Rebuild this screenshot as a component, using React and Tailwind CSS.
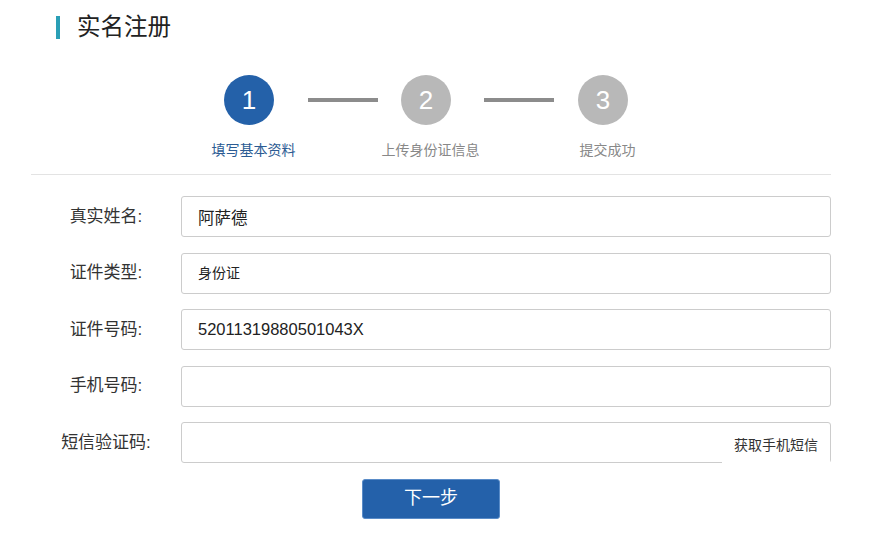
import { useState } from 'react';

const FONT = { fontFamily: '"Liberation Sans", "Noto Sans CJK SC", sans-serif' };

const steps = ['填写基本资料', '上传身份证信息', '提交成功'];

function Field({ label, children }) {
  return (
    <div className="flex items-center h-[41px]">
      <label className="w-[150px] text-center text-[17px] text-[#333]">{label}</label>
      <div className="relative flex-1 h-full">{children}</div>
    </div>
  );
}

export default function App() {
  const [name, setName] = useState('阿萨德');
  const [idNo, setIdNo] = useState('52011319880501043X');
  const [phone, setPhone] = useState('');
  const [code, setCode] = useState('');

  const inputCls =
    'w-full h-full border border-[#ccc] rounded-[3px] pl-[16px] pr-3 text-[16.5px] text-[#222] outline-none bg-white';

  return (
    <div className="min-h-screen bg-white" style={FONT}>
      <div className="ml-[31px] w-[800px] pt-[16px]">
        {/* 标题 */}
        <div className="flex items-center h-[23px] pl-[25px]">
          <span className="w-[4px] h-[23px] bg-[#2a9fb6]" />
          <h1 className="ml-[17px] text-[23.5px] text-[#222] leading-none">实名注册</h1>
        </div>

        {/* 步骤条 */}
        <div className="flex items-center mt-[36px] ml-[193px] h-[50px]">
          <div className="w-[50px] h-[50px] rounded-full bg-[#2461a9] text-white text-[26px] flex items-center justify-center">1</div>
          <div className="w-[70px] h-[4px] bg-[#8c8c8c] ml-[34px] mr-[23px]" />
          <div className="w-[50px] h-[50px] rounded-full bg-[#b8b8b8] text-white text-[26px] flex items-center justify-center">2</div>
          <div className="w-[70px] h-[4px] bg-[#8c8c8c] ml-[33px] mr-[24px]" />
          <div className="w-[50px] h-[50px] rounded-full bg-[#b8b8b8] text-white text-[26px] flex items-center justify-center">3</div>
        </div>
        <div className="flex mt-[16px] ml-[134px] h-[18px]">
          {steps.map((s, i) => (
            <div
              key={s}
              className={`w-[177px] text-center text-[14px] leading-[18px] ${i === 0 ? 'text-[#2b5b93]' : 'text-[#888]'}`}
            >
              {s}
            </div>
          ))}
        </div>

        <div className="mt-[15px] border-t border-[#e3e3e3]" />

        {/* 表单 */}
        <form className="mt-[21px] flex flex-col gap-[15.5px]" onSubmit={(e) => e.preventDefault()}>
          <Field label="真实姓名:">
            <input className={inputCls} value={name} onChange={(e) => setName(e.target.value)} />
          </Field>
          <Field label="证件类型:">
            <div className="w-full h-full border border-[#ccc] rounded-[3px] pl-[16px] flex items-center text-[14px] text-[#222]">
              身份证
            </div>
          </Field>
          <Field label="证件号码:">
            <input className={inputCls} value={idNo} onChange={(e) => setIdNo(e.target.value)} />
          </Field>
          <Field label="手机号码:">
            <input className={inputCls} value={phone} onChange={(e) => setPhone(e.target.value)} />
          </Field>
          <Field label="短信验证码:">
            <input className={inputCls} value={code} onChange={(e) => setCode(e.target.value)} />
            <button
              type="button"
              className="absolute right-[1px] top-[3px] h-[40px] w-[108px] bg-white text-[14px] text-[#333] text-center"
            >
              获取手机短信
            </button>
          </Field>

          <div className="flex justify-center">
            <button
              type="submit"
              className="w-[138px] h-[40px] bg-[#2461aa] rounded-[3px] text-white text-[18px] border border-[#5a8cc8]"
            >
              下一步
            </button>
          </div>
        </form>
      </div>
    </div>
  );
}
